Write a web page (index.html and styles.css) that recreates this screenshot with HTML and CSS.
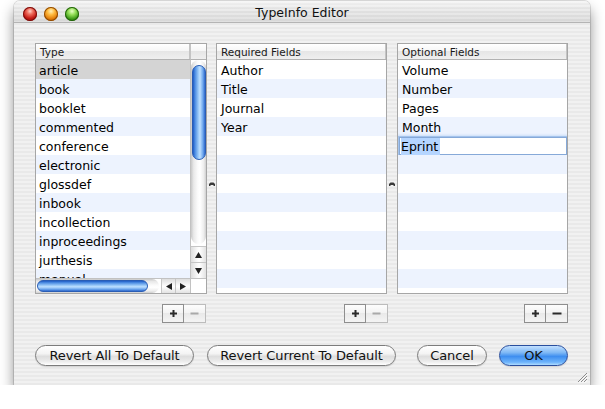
FILE: index.html
```html
<!DOCTYPE html>
<html>
<head>
<meta charset="utf-8">
<title>TypeInfo Editor</title>
<link rel="stylesheet" href="styles.css">
</head>
<body>
<div class="window">
  <div class="titlebar">
    <div class="lights">
      <span class="light red"></span>
      <span class="light yellow"></span>
      <span class="light green"></span>
    </div>
    <div class="title">TypeInfo Editor</div>
    <div></div>
  </div>
  <div class="content">
    <div class="panes">
      <div class="pane">
        <div class="table table-type">
          <div class="th">Type</div>
          <div class="th th-corner"></div>
          <div class="rows">
            <div class="row selected">article</div>
            <div class="row">book</div>
            <div class="row">booklet</div>
            <div class="row">commented</div>
            <div class="row">conference</div>
            <div class="row">electronic</div>
            <div class="row">glossdef</div>
            <div class="row">inbook</div>
            <div class="row">incollection</div>
            <div class="row">inproceedings</div>
            <div class="row">jurthesis</div>
            <div class="row">manual</div>
          </div>
          <div class="vscroll">
            <div class="vtrack"><div class="vthumb"></div></div>
            <div class="varrow"><svg width="7" height="6" viewBox="0 0 7 6"><path d="M3.5 0 L7 6 H0 Z" fill="#222"/></svg></div>
            <div class="varrow"><svg width="7" height="6" viewBox="0 0 7 6"><path d="M0 0 H7 L3.5 6 Z" fill="#222"/></svg></div>
          </div>
          <div class="hscroll">
            <div class="htrack"><div class="hthumb"></div></div>
            <div class="harrow harrow-l"><svg width="6" height="7" viewBox="0 0 6 7"><path d="M0 3.5 L6 0 V7 Z" fill="#222"/></svg></div>
            <div class="harrow harrow-r"><svg width="6" height="7" viewBox="0 0 6 7"><path d="M0 0 L6 3.5 L0 7 Z" fill="#222"/></svg></div>
          </div>
          <div class="corner"></div>
        </div>
        <div class="pm">
          <div class="pmbtn"><svg width="9" height="9" viewBox="0 0 9 9"><path d="M4.5 1 V8 M1 4.5 H8" stroke="#2a2a2a" stroke-width="2"/></svg></div>
          <div class="pmbtn disabled"><svg width="9" height="9" viewBox="0 0 9 9"><path d="M0.5 4.5 H8.5" stroke="#a9a9a9" stroke-width="2"/></svg></div>
        </div>
      </div>

      <div class="divider"><svg width="6" height="4" viewBox="0 0 6 4"><path d="M0 4 V2 L1.5 0.5 H4.5 L6 2 V4 H4.5 V3 H1.5 V4 Z" fill="#3a3a3a"/></svg></div>

      <div class="pane">
        <div class="table table-list">
          <div class="th">Required Fields</div>
          <div class="rows">
            <div class="row">Author</div>
            <div class="row">Title</div>
            <div class="row">Journal</div>
            <div class="row">Year</div>
            <div class="row"></div>
            <div class="row"></div>
            <div class="row"></div>
            <div class="row"></div>
            <div class="row"></div>
            <div class="row"></div>
            <div class="row"></div>
            <div class="row"></div>
            <div class="row"></div>
          </div>
        </div>
        <div class="pm">
          <div class="pmbtn"><svg width="9" height="9" viewBox="0 0 9 9"><path d="M4.5 1 V8 M1 4.5 H8" stroke="#2a2a2a" stroke-width="2"/></svg></div>
          <div class="pmbtn disabled"><svg width="9" height="9" viewBox="0 0 9 9"><path d="M0.5 4.5 H8.5" stroke="#a9a9a9" stroke-width="2"/></svg></div>
        </div>
      </div>

      <div class="divider"><svg width="6" height="4" viewBox="0 0 6 4"><path d="M0 4 V2 L1.5 0.5 H4.5 L6 2 V4 H4.5 V3 H1.5 V4 Z" fill="#3a3a3a"/></svg></div>

      <div class="pane">
        <div class="table table-list">
          <div class="th">Optional Fields</div>
          <div class="rows">
            <div class="row">Volume</div>
            <div class="row">Number</div>
            <div class="row">Pages</div>
            <div class="row">Month</div>
            <div class="row editing"><div class="edit"><span class="sel">Eprint</span></div></div>
            <div class="row"></div>
            <div class="row"></div>
            <div class="row"></div>
            <div class="row"></div>
            <div class="row"></div>
            <div class="row"></div>
            <div class="row"></div>
            <div class="row"></div>
          </div>
        </div>
        <div class="pm">
          <div class="pmbtn"><svg width="9" height="9" viewBox="0 0 9 9"><path d="M4.5 1 V8 M1 4.5 H8" stroke="#2a2a2a" stroke-width="2"/></svg></div>
          <div class="pmbtn"><svg width="10" height="9" viewBox="0 0 10 9"><path d="M0.5 4.5 H9.5" stroke="#2a2a2a" stroke-width="2"/></svg></div>
        </div>
      </div>
    </div>

    <div class="actions">
      <div class="btn btn-all">Revert All To Default</div>
      <div class="btn btn-current">Revert Current To Default</div>
      <div class="btn btn-cancel">Cancel</div>
      <div class="btn btn-ok">OK</div>
    </div>
  </div>
  <svg class="grip" width="11" height="11" viewBox="0 0 11 11">
    <path d="M10 1 L1 10 M10 4 L4 10 M10 7 L7 10" stroke="#8c8c8c" stroke-width="1"/>
    <path d="M10.8 1.8 L1.8 10.8 M10.8 4.8 L4.8 10.8 M10.8 7.8 L7.8 10.8" stroke="#fff" stroke-width="0.8"/>
  </svg>
</div>
</body>
</html>
```

FILE: styles.css
```css
* { box-sizing: border-box; }

html, body {
  margin: 0;
  padding: 0;
  background: #ffffff;
}

body {
  padding: 1px 0 0 14px;
  font-family: "DejaVu Sans", "Liberation Sans", sans-serif;
  color: #000;
}

.window {
  position: relative;
  width: 576px;
  height: 384px;
  border-radius: 6px 6px 0 0;
  background: repeating-linear-gradient(to bottom, #f1f1f1 0, #f1f1f1 2px, #e9e9e9 2px, #e9e9e9 4px);
  box-shadow: 0 8px 14px rgba(0, 0, 0, 0.45), 0 0 0 1px rgba(0, 0, 0, 0.12);
  display: flex;
  flex-direction: column;
}

.titlebar {
  height: 22px;
  flex: none;
  display: grid;
  grid-template-columns: 1fr auto 1fr;
  border-radius: 6px 6px 0 0;
  border-bottom: 1px solid #b4b4b4;
  background:
    linear-gradient(to bottom, rgba(255,255,255,0.55), rgba(255,255,255,0) 40%, rgba(0,0,0,0.05)),
    repeating-linear-gradient(to bottom, #ececec 0, #ececec 2px, #e2e2e2 2px, #e2e2e2 4px);
}

.lights {
  display: flex;
  gap: 7px;
  padding: 6px 0 0 9px;
}

.light {
  width: 14px;
  height: 14px;
  border-radius: 50%;
  display: block;
}

.red {
  background: radial-gradient(circle at 50% 30%, #ffd0c8 0, #f07060 25%, #c41a14 60%, #8c0e0a 100%);
  box-shadow: inset 0 0 0 1px #7a0e0c;
}
.yellow {
  background: radial-gradient(circle at 50% 30%, #fff0b8 0, #ffbb40 30%, #e07a08 65%, #a04c00 100%);
  box-shadow: inset 0 0 0 1px #8e4a02;
}
.green {
  background: radial-gradient(circle at 50% 30%, #e8ffc8 0, #96e05a 30%, #3c9a16 65%, #1e6208 100%);
  box-shadow: inset 0 0 0 1px #23620c;
}

.title {
  font-size: 12.5px;
  line-height: 15px;
  padding-top: 4px;
  color: #111;
}

.content {
  flex: 1;
  padding: 20px 22px 19px 21px;
  display: flex;
  flex-direction: column;
}

.panes {
  display: grid;
  grid-template-columns: 172px 9px 171px 10px 171px;
  height: 280px;
}

.pane {
  display: flex;
  flex-direction: column;
}

.divider {
  display: flex;
  align-items: center;
  justify-content: center;
  padding-top: 1px;
}

.table {
  height: 251px;
  border: 1px solid #a6a6a6;
  background: #fff;
  overflow: hidden;
}

.table-type {
  display: grid;
  grid-template-columns: 154px 16px;
  grid-template-rows: 16px 218px 15px;
}

.table-list {
  display: flex;
  flex-direction: column;
}

.th {
  height: 16px;
  flex: none;
  font-size: 10.5px;
  line-height: 15px;
  padding-left: 4px;
  padding-top: 1px;
  color: #1a1a1a;
  border-bottom: 1px solid #b2b2b2;
  background: linear-gradient(to bottom, #ffffff 0, #f6f6f6 45%, #e6e6e6 50%, #efefef 100%);
  box-shadow: inset -1px 0 0 #c4c4c4;
}

.th-corner {
  padding: 0;
  border-left: 1px solid #c4c4c4;
  box-shadow: none;
}

.rows {
  overflow: hidden;
  flex: 1;
}

.row {
  height: 19px;
  padding-top: 2px;
  line-height: 17px;
  font-size: 12.5px;
  padding-left: 3px;
  white-space: nowrap;
  background: #fff;
}

.table-list .row {
  padding-left: 4px;
}

.row:nth-child(even) {
  background: #edf3fe;
}

.row.selected {
  background: #d4d4d4;
}

.table-list .row.editing {
  padding: 1px 0 0 1px;
  line-height: 17px;
}

.edit {
  height: 18px;
  width: 168px;
  background: #fff;
  border: 1px solid #86a9d8;
  box-shadow: 0 0 0 1px rgba(120, 165, 225, 0.55), 0 0 2px 2px rgba(140, 180, 235, 0.35);
  padding-left: 1px;
}

.sel {
  display: inline-block;
  background: #b5d5ff;
  line-height: 16px;
  padding-top: 1px;
  padding-right: 2px;
}

/* vertical scroller */
.vscroll {
  display: flex;
  flex-direction: column;
  border-left: 1px solid #c2c2c2;
  background: #fff;
}

.vtrack {
  flex: 1;
  border-radius: 8px;
  background: linear-gradient(to right, #c9c9c9 0, #e9e9e9 18%, #fbfbfb 45%, #ffffff 60%, #ededed 85%, #cfcfcf 100%);
  padding: 5px 0 0 1px;
  margin-bottom: 2px;
}

.vthumb {
  height: 95px;
  border-radius: 7px;
  border: 1px solid #2a5db4;
  background: linear-gradient(to right, #1f5bc4 0, #4f8fe4 18%, #9ccaf8 45%, #bfe0ff 58%, #6fa8ee 82%, #2d68cc 100%);
}

.varrow {
  height: 16px;
  flex: none;
  display: flex;
  align-items: center;
  justify-content: center;
  border-top: 1px solid #c6c6c6;
  background: linear-gradient(to right, #dedede, #fbfbfb 45%, #ffffff 55%, #e2e2e2);
}

/* horizontal scroller */
.hscroll {
  display: flex;
  border-top: 1px solid #c2c2c2;
  background: #fff;
}

.htrack {
  flex: 1;
  border-radius: 0 8px 8px 0;
  background: linear-gradient(to bottom, #c9c9c9 0, #e9e9e9 18%, #fbfbfb 45%, #ffffff 60%, #ededed 85%, #cfcfcf 100%);
  padding: 1px 0 1px 1px;
}

.hthumb {
  width: 111px;
  height: 100%;
  border-radius: 7px;
  border: 1px solid #2a5db4;
  background: linear-gradient(to bottom, #1f5bc4 0, #4f8fe4 18%, #9ccaf8 45%, #bfe0ff 58%, #6fa8ee 82%, #2d68cc 100%);
}

.harrow {
  flex: none;
  display: flex;
  align-items: center;
  justify-content: center;
  background: linear-gradient(to bottom, #dedede, #fbfbfb 45%, #ffffff 55%, #e2e2e2);
}

.harrow-l { width: 14px; margin-left: 2px; border-left: 1px solid #c6c6c6; }
.harrow-r { width: 15px; border-left: 1px solid #c6c6c6; }

.corner {
  border-top: 1px solid #c2c2c2;
  border-left: 1px solid #c2c2c2;
  background: #fff;
}

/* plus / minus */
.pm {
  margin-top: 10px;
  height: 19px;
  display: flex;
  justify-content: flex-end;
}

.pmbtn {
  width: 22px;
  height: 19px;
  display: flex;
  align-items: center;
  justify-content: center;
  border: 1px solid #8e8e8e;
  background: linear-gradient(to bottom, #fdfdfd, #f2f2f2 50%, #e9e9e9 50%, #f4f4f4);
}

.pmbtn + .pmbtn {
  border-left: none;
}

.pmbtn.disabled {
  border-color: #bcbcbc;
}

.pane:first-child .pm {
  margin-right: 1px;
}

.pane:nth-child(3) .pm {
  margin-right: -1px;
}

/* push buttons */
.actions {
  margin-top: 22px;
  display: flex;
  gap: 13px;
}

.btn {
  height: 21px;
  border: 1px solid #7c7c7c;
  border-radius: 11px;
  font-size: 13px;
  letter-spacing: -0.1px;
  line-height: 19px;
  text-align: center;
  color: #111;
  background: linear-gradient(to bottom, #ffffff 0, #f4f4f4 40%, #dedede 55%, #ebebeb 80%, #ffffff 100%);
  box-shadow: 0 1px 1px rgba(0, 0, 0, 0.12);
}

.btn-all { width: 159px; }
.btn-current { width: 189px; }
.btn-cancel { width: 70px; margin-left: auto; }
.btn-ok {
  width: 69px;
  margin-left: -1px;
  border-color: #2a4f9e;
  background: linear-gradient(to bottom, #c2e0ff 0, #7eb8f5 35%, #3e8ef0 55%, #6db3fb 85%, #aedcff 100%);
}

.grip {
  position: absolute;
  right: 2px;
  bottom: 2px;
}
```
